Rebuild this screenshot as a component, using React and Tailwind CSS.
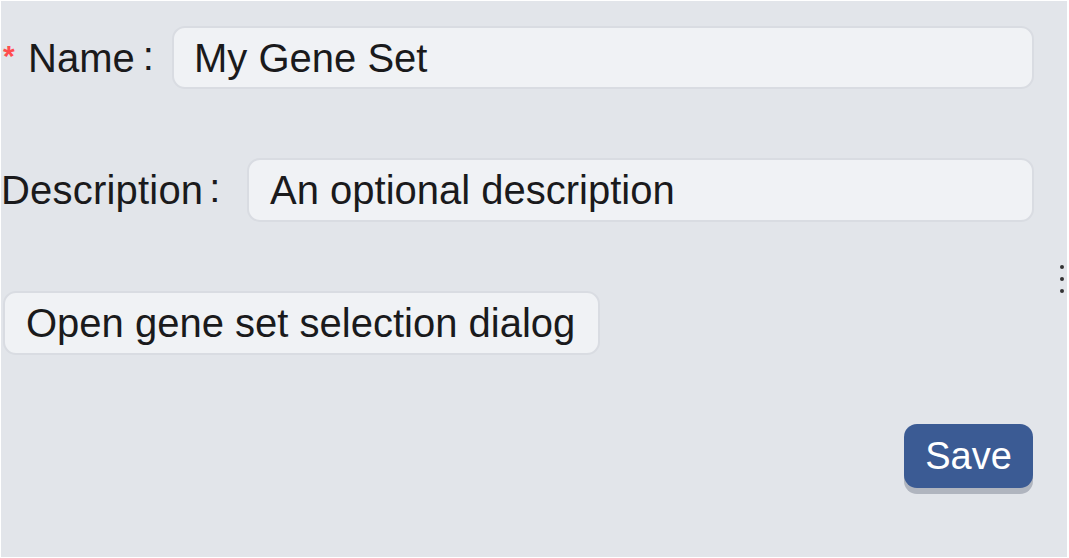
export default function App() {
  const font = { fontFamily: '"Liberation Sans", Arial, sans-serif' };
  return (
    <div className="w-[1069px] h-[558px] bg-white pt-[1px] pr-[2px] pb-[1px] pl-[1px]" style={font}>
      <div className="relative w-full h-full bg-[#e2e5ea] text-[#1a1a1c] pt-[25px] pr-[33px]">
        {/* Name row */}
        <div className="flex items-center h-[63px]">
          <div className="flex items-center w-[171px] h-full shrink-0">
            <span className="text-[#ff4d4f] text-[30px] font-bold leading-none ml-[2px] w-[25px] -mt-[4px]">*</span>
            <span className="text-[40px] leading-none">Name</span>
            <span className="text-[40px] leading-none ml-[8px] -mt-[4px]">:</span>
          </div>
          <div className="flex-1 h-full flex items-center rounded-[13px] border-2 border-[#d9dce2] bg-[#f0f2f5] pl-[20px] text-[40px] leading-none">
            My Gene Set
          </div>
        </div>

        {/* Description row */}
        <div className="flex items-center h-[64px] mt-[69px]">
          <div className="flex items-center w-[246px] h-full shrink-0">
            <span className="text-[40px] leading-none tracking-[0.2px]">Description</span>
            <span className="text-[40px] leading-none ml-[6px] -mt-[4px]">:</span>
          </div>
          <div className="flex-1 h-full flex items-center rounded-[13px] border-2 border-[#d9dce2] bg-[#f0f2f5] pl-[21px] text-[40px] leading-none">
            An optional description
          </div>
        </div>

        {/* Open dialog button */}
        <div className="flex mt-[69px]">
          <div className="ml-[2px] h-[64px] w-[597px] flex items-center rounded-[13px] border-2 border-[#d9dce2] bg-[#f0f2f5] pl-[21px] text-[40px] leading-none whitespace-nowrap">
            Open gene set selection dialog
          </div>
        </div>

        {/* Save */}
        <div className="flex justify-end mt-[69px] mr-[1px]">
          <div className="h-[64px] w-[129px] flex items-center justify-center rounded-[13px] bg-[#3b5b94] text-white text-[38px] leading-none shadow-[0_6px_0_#b0b5bf]">
            Save
          </div>
        </div>

        {/* Splitter handle dots */}
        <div className="absolute right-[3px] top-[264px] flex flex-col gap-[8px]">
          <span className="block w-[4px] h-[4px] rounded-full bg-[#333]" />
          <span className="block w-[4px] h-[4px] rounded-full bg-[#333]" />
          <span className="block w-[4px] h-[4px] rounded-full bg-[#333]" />
        </div>
      </div>
    </div>
  );
}
